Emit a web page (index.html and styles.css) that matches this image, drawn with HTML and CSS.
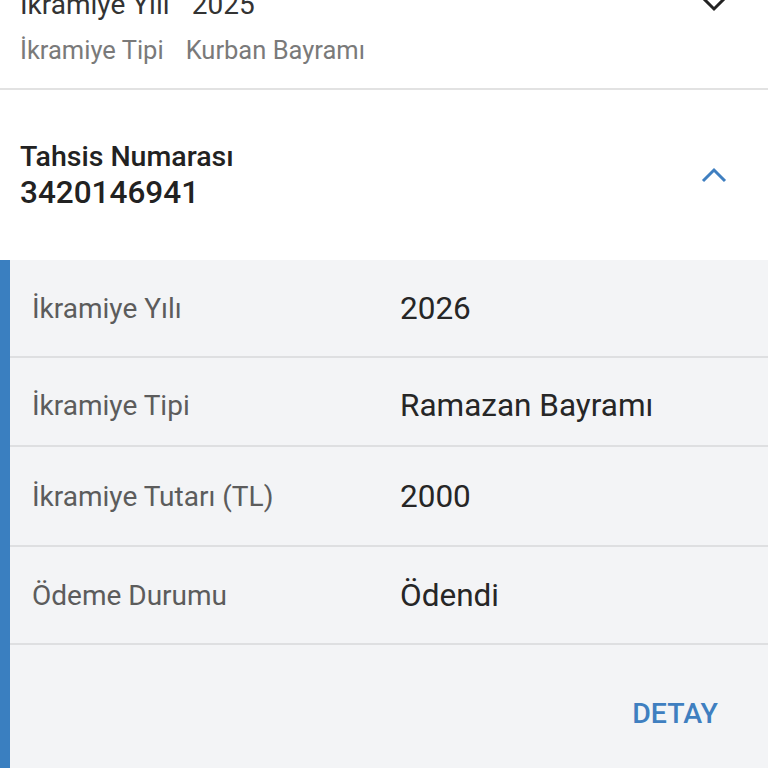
FILE: index.html
```html
<!DOCTYPE html>
<html lang="tr">
<head>
    <meta charset="UTF-8">
    <meta name="viewport" content="width=device-width, initial-scale=1.0">
    <title>İkramiye Bilgileri</title>
    <link rel="stylesheet" href="styles.css">
</head>
<body>

<div class="screen">
    <!-- previous item, scrolled partly out of view -->
    <div class="item collapsed">
        <div class="item-summary">
            <div class="summary-line strong">
                <span>İkramiye Yılı</span>
                <span>2025</span>
            </div>
            <div class="summary-line">
                <span>İkramiye Tipi</span>
                <span>Kurban Bayramı</span>
            </div>
        </div>
        <svg class="chevron down" width="26" height="16" viewBox="0 0 26 16">
            <path d="M2 2 L13 13 L24 2" fill="none" stroke="#222" stroke-width="3"/>
        </svg>
    </div>

    <div class="item expanded">
        <div class="item-header">
            <div class="item-title">
                <div class="title-label">Tahsis Numarası</div>
                <div class="title-number">3420146941</div>
            </div>
            <svg class="chevron" width="26" height="16" viewBox="0 0 26 16">
                <path d="M2 14 L13 3 L24 14" fill="none" stroke="#3f7fc0" stroke-width="3"/>
            </svg>
        </div>

        <div class="details">
            <div class="detail-row">
                <div class="detail-label">İkramiye Yılı</div>
                <div class="detail-value">2026</div>
            </div>
            <div class="detail-row short">
                <div class="detail-label">İkramiye Tipi</div>
                <div class="detail-value">Ramazan Bayramı</div>
            </div>
            <div class="detail-row tall">
                <div class="detail-label">İkramiye Tutarı (TL)</div>
                <div class="detail-value">2000</div>
            </div>
            <div class="detail-row">
                <div class="detail-label">Ödeme Durumu</div>
                <div class="detail-value">Ödendi</div>
            </div>
            <div class="details-footer">
                <button class="detail-btn">DETAY</button>
            </div>
        </div>
    </div>
</div>

</body>
</html>
```

FILE: styles.css
```css
body {
    margin: 0;
    background: #ffffff;
    font-family: Roboto, 'Noto Sans', sans-serif;
    overflow: hidden;
    height: 768px;
}

.screen {
    margin-top: -26px; /* list is scrolled */
}

.item {
    background: #ffffff;
}

.collapsed {
    display: flex;
    justify-content: space-between;
    align-items: flex-start;
    padding: 14px 41px 0 20px;
    height: 116px;
    border-bottom: 2px solid #e2e2e2;
    box-sizing: border-box;
}

.item-summary {
    display: flex;
    flex-direction: column;
    gap: 11px;
}

.summary-line {
    display: flex;
    gap: 22px;
    font-size: 25.5px;
    line-height: 34px;
    color: #7a7a7a;
}

.summary-line.strong {
    font-size: 28px;
    color: #333333;
}

.chevron.down {
    margin-top: 8px;
}

.item-header {
    display: flex;
    justify-content: space-between;
    align-items: center;
    padding: 0 41px 0 20px;
    height: 170px;
    box-sizing: border-box;
}

.title-label {
    font-size: 28.5px;
    line-height: 35px;
    font-weight: 500;
    color: #222222;
}

.title-number {
    font-size: 31.5px;
    line-height: 37px;
    font-weight: 500;
    color: #222222;
}

.details {
    background: #f3f4f6;
    border-left: 10px solid #3a7fc0;
    height: 508px;
}

.detail-row {
    display: flex;
    align-items: center;
    height: 98px;
    border-bottom: 2px solid #dedfe1;
    box-sizing: border-box;
    padding-left: 22px;
}

.detail-row.short {
    height: 89px;
    padding-top: 8px;
}

.detail-row.tall {
    height: 100px;
}

.detail-label {
    width: 368px;
    font-size: 28px;
    color: #5c5c5c;
}

.detail-value {
    font-size: 31.5px;
    color: #262626;
}

.details-footer {
    display: flex;
    justify-content: flex-end;
    padding: 52px 50px 0 0;
}

.detail-btn {
    background: none;
    border: none;
    padding: 0;
    font-family: Roboto, 'Noto Sans', sans-serif;
    font-size: 28.5px;
    font-weight: 500;
    color: #3f7fc0;
    cursor: pointer;
}
```
